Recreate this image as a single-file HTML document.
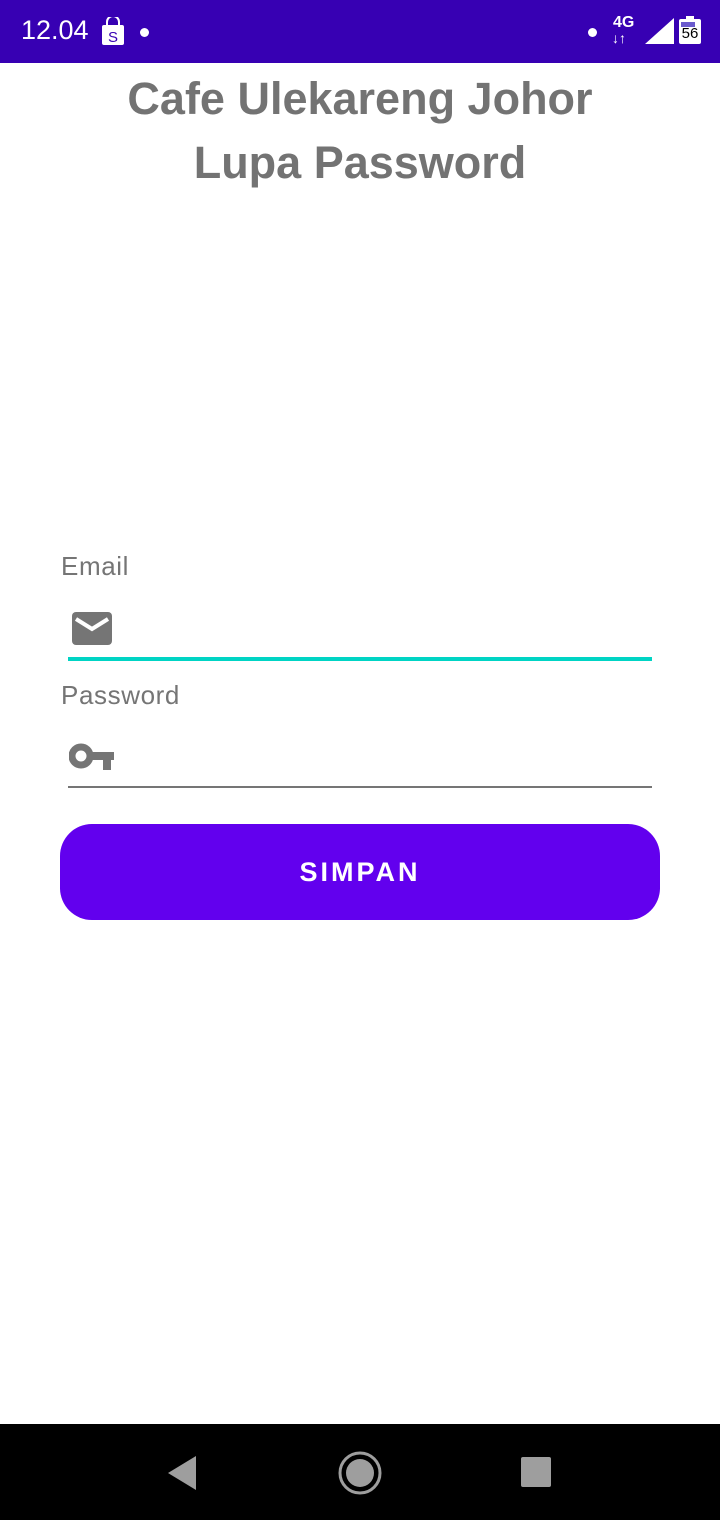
<!DOCTYPE html>
<html><head><meta charset="utf-8"><style>
body{margin:0;width:720px;height:1520px;background:#fff;font-family:"Liberation Sans",sans-serif;position:relative;overflow:hidden}
.sb{position:absolute;top:0;left:0;width:720px;height:63px;background:#3700b3;color:#fff}
.abs{position:absolute}
h1{position:absolute;top:67px;left:0;width:720px;margin:0;text-align:center;color:#737373;font-size:45px;font-weight:bold;line-height:64px}
.lbl{position:absolute;left:61px;color:#757575;font-size:26px;letter-spacing:0.6px}
.nav{position:absolute;top:1424px;left:0;width:720px;height:96px;background:#000}
</style></head><body>
<div class="sb">
<div class="abs" style="left:21px;top:15px;font-size:27px">12.04</div>
<svg class="abs" style="left:101px;top:17px" width="24" height="28" viewBox="0 0 24 28"><path d="M6 8 V5 a6 6 0 0 1 12 0 V8" fill="none" stroke="#fff" stroke-width="2"/><rect x="1" y="8" width="22" height="20" rx="2" fill="#fff"/><text x="12" y="25" font-size="15" text-anchor="middle" fill="#3700b3" font-family="Liberation Sans">S</text></svg>
<div class="abs" style="left:140px;top:28px;width:9px;height:9px;border-radius:50%;background:#fff"></div>
<div class="abs" style="left:588px;top:28px;width:9px;height:9px;border-radius:50%;background:#fff"></div>
<div class="abs" style="left:613px;top:14px;font-size:16px;font-weight:bold">4G</div>
<div class="abs" style="left:612px;top:30px;font-size:14px;font-weight:bold">↓↑</div>
<svg class="abs" style="left:645px;top:18px" width="30" height="26"><path d="M29 0 V26 H0 Z" fill="#fff"/></svg>
<svg class="abs" style="left:679px;top:16px" width="22" height="28"><rect x="7" y="0" width="8" height="3" fill="#fff"/><rect x="0" y="3" width="22" height="25" rx="2" fill="#fff"/><rect x="2" y="6" width="14" height="5" fill="#6a5acd"/><text x="11" y="22" font-size="15" text-anchor="middle" fill="#000" font-family="Liberation Sans">56</text></svg>
</div>
<h1>Cafe Ulekareng Johor<br>Lupa Password</h1>
<div class="lbl" style="top:551px">Email</div>
<svg class="abs" style="left:72px;top:612px" width="40" height="33"><rect width="40" height="33" rx="4" fill="#757575"/><path d="M4 7 L20 17 L36 7" fill="none" stroke="#fff" stroke-width="4"/></svg>
<div class="abs" style="left:68px;top:657px;width:584px;height:4px;background:#00d4c4"></div>
<div class="lbl" style="top:680px">Password</div>
<svg class="abs" style="left:69px;top:743px" width="46" height="28"><circle cx="12" cy="13" r="9" fill="none" stroke="#757575" stroke-width="7"/><rect x="20" y="9" width="25" height="8" fill="#757575"/><rect x="34" y="9" width="8" height="18" fill="#757575"/></svg>
<div class="abs" style="left:68px;top:786px;width:584px;height:2px;background:#757575"></div>
<div class="abs" style="left:60px;top:824px;width:600px;height:96px;border-radius:32px;background:#6200ee;color:#fff;font-size:27px;font-weight:bold;letter-spacing:3px;text-align:center;line-height:96px">SIMPAN</div>
<div class="nav">
<svg class="abs" style="left:166px;top:32px" width="32" height="34"><path d="M30 0 V34 L2 17 Z" fill="#9e9e9e"/></svg>
<svg class="abs" style="left:337px;top:26px" width="46" height="46"><circle cx="23" cy="23" r="20" fill="none" stroke="#9e9e9e" stroke-width="3"/><circle cx="23" cy="23" r="14" fill="#9e9e9e"/></svg>
<div class="abs" style="left:521px;top:33px;width:30px;height:30px;border-radius:2px;background:#9e9e9e"></div>
</div>
</body></html>
